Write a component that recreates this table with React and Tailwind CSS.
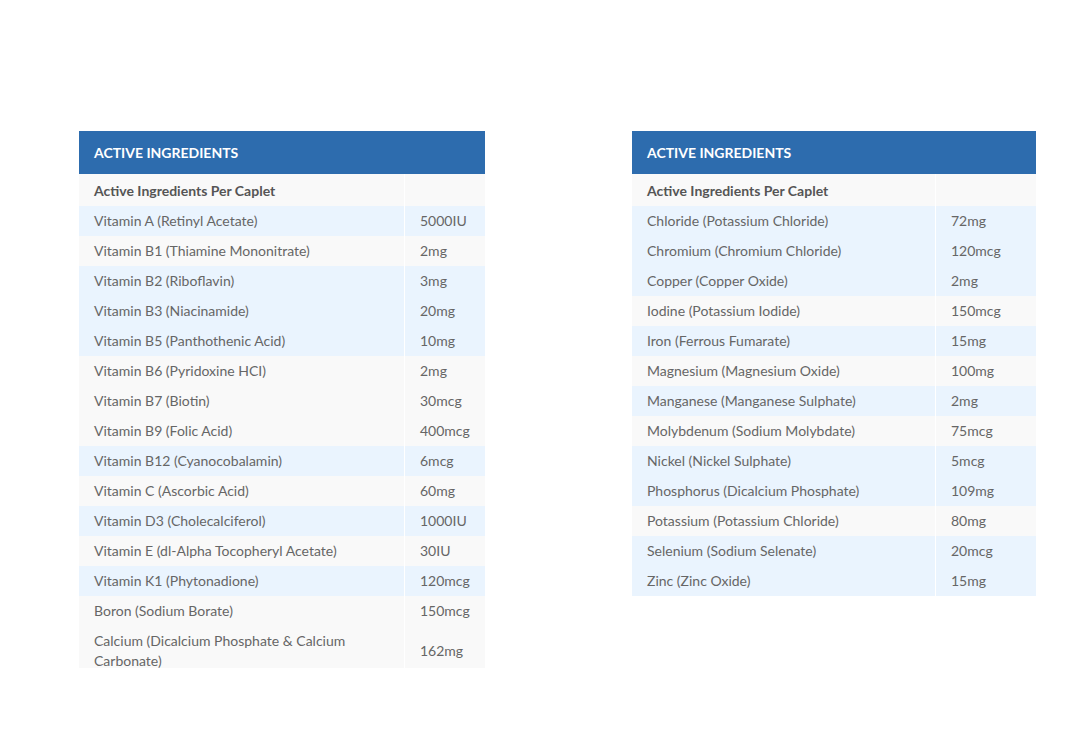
import React from "react";

const left = [
  ["Vitamin A (Retinyl Acetate)", "5000IU", "b"],
  ["Vitamin B1 (Thiamine Mononitrate)", "2mg", "g"],
  ["Vitamin B2 (Riboflavin)", "3mg", "b"],
  ["Vitamin B3 (Niacinamide)", "20mg", "b"],
  ["Vitamin B5 (Panthothenic Acid)", "10mg", "b"],
  ["Vitamin B6 (Pyridoxine HCI)", "2mg", "g"],
  ["Vitamin B7 (Biotin)", "30mcg", "g"],
  ["Vitamin B9 (Folic Acid)", "400mcg", "g"],
  ["Vitamin B12 (Cyanocobalamin)", "6mcg", "b"],
  ["Vitamin C (Ascorbic Acid)", "60mg", "g"],
  ["Vitamin D3 (Cholecalciferol)", "1000IU", "b"],
  ["Vitamin E (dl-Alpha Tocopheryl Acetate)", "30IU", "g"],
  ["Vitamin K1 (Phytonadione)", "120mcg", "b"],
  ["Boron (Sodium Borate)", "150mcg", "g"],
  ["Calcium (Dicalcium Phosphate & Calcium Carbonate)", "162mg", "g"],
];

const right = [
  ["Chloride (Potassium Chloride)", "72mg", "b"],
  ["Chromium (Chromium Chloride)", "120mcg", "b"],
  ["Copper (Copper Oxide)", "2mg", "b"],
  ["Iodine (Potassium Iodide)", "150mcg", "g"],
  ["Iron (Ferrous Fumarate)", "15mg", "b"],
  ["Magnesium (Magnesium Oxide)", "100mg", "g"],
  ["Manganese (Manganese Sulphate)", "2mg", "b"],
  ["Molybdenum (Sodium Molybdate)", "75mcg", "g"],
  ["Nickel (Nickel Sulphate)", "5mcg", "b"],
  ["Phosphorus (Dicalcium Phosphate)", "109mg", "b"],
  ["Potassium (Potassium Chloride)", "80mg", "g"],
  ["Selenium (Sodium Selenate)", "20mcg", "b"],
  ["Zinc (Zinc Oxide)", "15mg", "b"],
];

function Table({ rows, c1, c2, width, clip }) {
  return (
    <div className={clip} style={{ width }}>
      <div className="h-[43px] bg-[#2d6cae] flex items-center px-[15px]">
        <span className="text-white font-bold text-[14px] uppercase">Active Ingredients</span>
      </div>
      <div className="flex bg-[#f9f9f9]">
        <div className={`${c1} h-[32px] flex items-center px-[15px] font-bold text-[#555] border-r border-white`}>
          Active Ingredients Per Caplet
        </div>
        <div className={`${c2}`} />
      </div>
      {rows.map(([n, v, c]) => (
        <div key={n} className={`flex ${c === "b" ? "bg-[#eaf4fe]" : "bg-[#f9f9f9]"}`}>
          <div className={`${c1} py-[5px] px-[15px] leading-[20px] border-r border-white`}>{n}</div>
          <div className={`${c2} py-[5px] px-[15px] leading-[20px] flex items-center`}>{v}</div>
        </div>
      ))}
    </div>
  );
}

export default function App() {
  return (
    <div
      className="w-[1080px] h-[753px] bg-white flex items-start pt-[131px] pl-[79px] gap-[147px] text-[14px] text-[#666]"
      style={{ fontFamily: "Lato, 'Open Sans', sans-serif" }}
    >
      <Table rows={left} c1="w-[326px]" c2="w-[80px]" width={406} clip="h-[537px] overflow-hidden" />
      <Table rows={right} c1="w-[304px]" c2="w-[100px]" width={404} clip="" />
    </div>
  );
}
